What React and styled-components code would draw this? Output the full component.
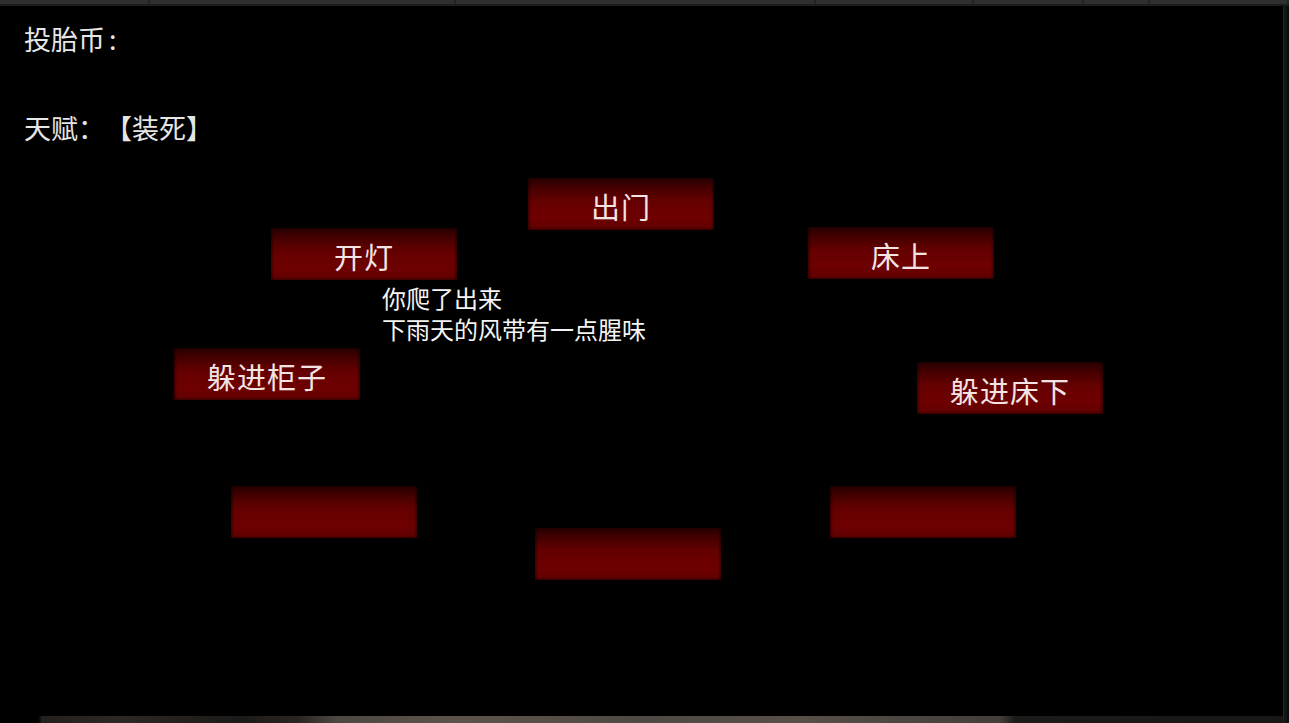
import React from "react";
import styled, { createGlobalStyle } from "styled-components";

const GlobalStyle = createGlobalStyle`
  html, body {
    margin: 0;
    padding: 0;
    background: #000;
  }
  #root {
    width: 1289px;
    height: 723px;
    overflow: hidden;
  }
`;

const Frame = styled.div`
  width: 1289px;
  height: 723px;
  display: grid;
  grid-template-columns: 1fr 6px;
  grid-template-rows: 6px 1fr 7px;
  background: #000;
  font-family: "Noto Sans CJK SC", "Noto Sans", sans-serif;
`;

const TabStrip = styled.div`
  grid-column: 1 / 3;
  grid-row: 1;
  display: flex;
  background: #2f2f2f;
  border-bottom: 2px solid #1c1c1c;
  box-sizing: border-box;
`;

const Tab = styled.div`
  width: ${({ $w }) => ($w ? `${$w}px` : "auto")};
  flex: ${({ $grow }) => ($grow ? 1 : "none")};
  border-right: 2px solid #242424;
  box-sizing: border-box;
`;

const Scene = styled.div`
  grid-column: 1;
  grid-row: 2;
  position: relative;
  background: #000;
`;

const SideRail = styled.div`
  grid-column: 2;
  grid-row: 2 / 4;
  background: #141414;
  border-left: 1px solid #262626;
  box-shadow: inset -2px 0 0 #0c0c0c;
`;

const Ground = styled.div`
  grid-column: 1;
  grid-row: 3;
  background: linear-gradient(
    to right,
    #000 0px,
    #000 38px,
    #23201d 42px,
    #2c2825 120px,
    #1c1a18 240px,
    #2a2622 300px,
    #4e4741 335px,
    #5c544c 460px,
    #504943 640px,
    #574f48 800px,
    #443e39 1000px,
    #1d1b19 1015px,
    #181715 1283px
  );
`;

const Stats = styled.div`
  position: absolute;
  left: 24px;
  top: 14px;
  display: flex;
  flex-direction: column;
  gap: 51px;
  color: #e6e6e6;
  font-size: 27px;
  line-height: 38px;
  text-spacing-trim: space-all;
`;

const StatLine = styled.div`
  white-space: nowrap;
`;

const Colon = styled.span`
  margin-left: 4px;
`;

const Choice = styled.div`
  position: absolute;
  left: ${({ $x }) => $x}px;
  top: ${({ $y }) => $y}px;
  width: 186px;
  height: 52px;
  display: flex;
  align-items: center;
  justify-content: center;
  background: linear-gradient(
    to bottom,
    #260000 0%,
    #4a0000 22%,
    #650000 45%,
    #6e0000 75%,
    #660000 92%,
    #4c0000 100%
  );
  box-shadow: inset 2px 0 2px rgba(0, 0, 0, 0.35), inset -2px 0 2px rgba(0, 0, 0, 0.35);
  color: #f2e4e4;
  font-size: 29px;
  letter-spacing: 1px;
  cursor: pointer;
  padding-top: 4px;
  box-sizing: border-box;
`;

const Narration = styled.div`
  position: absolute;
  left: 382px;
  top: 276px;
  color: #f4f4f4;
  font-size: 24px;
  line-height: 31px;
  white-space: nowrap;
`;

const tabs = [150, 306, 360, 158, 110, 66];

const choices = [
  { x: 528, y: 178, label: "出门" },
  { x: 271, y: 228, label: "开灯" },
  { x: 808, y: 227, label: "床上" },
  { x: 174, y: 348, label: "躲进柜子" },
  { x: 917, y: 362, label: "躲进床下" },
  { x: 231, y: 486, label: "" },
  { x: 830, y: 486, label: "" },
  { x: 535, y: 528, label: "" },
];

export default function App() {
  return (
    <>
      <GlobalStyle />
      <Frame>
        <TabStrip>
          {tabs.map((w, i) => (
            <Tab key={i} $w={w} />
          ))}
          <Tab $grow />
        </TabStrip>
        <Scene>
          <Stats>
            <StatLine>
              投胎币<Colon>:</Colon>
            </StatLine>
            <StatLine>天赋：【装死】</StatLine>
          </Stats>
          {choices.map((c, i) => (
            <Choice key={i} $x={c.x} $y={c.y - 6}>
              {c.label}
            </Choice>
          ))}
          <Narration>
            你爬了出来
            <br />
            下雨天的风带有一点腥味
          </Narration>
        </Scene>
        <SideRail />
        <Ground />
      </Frame>
    </>
  );
}
